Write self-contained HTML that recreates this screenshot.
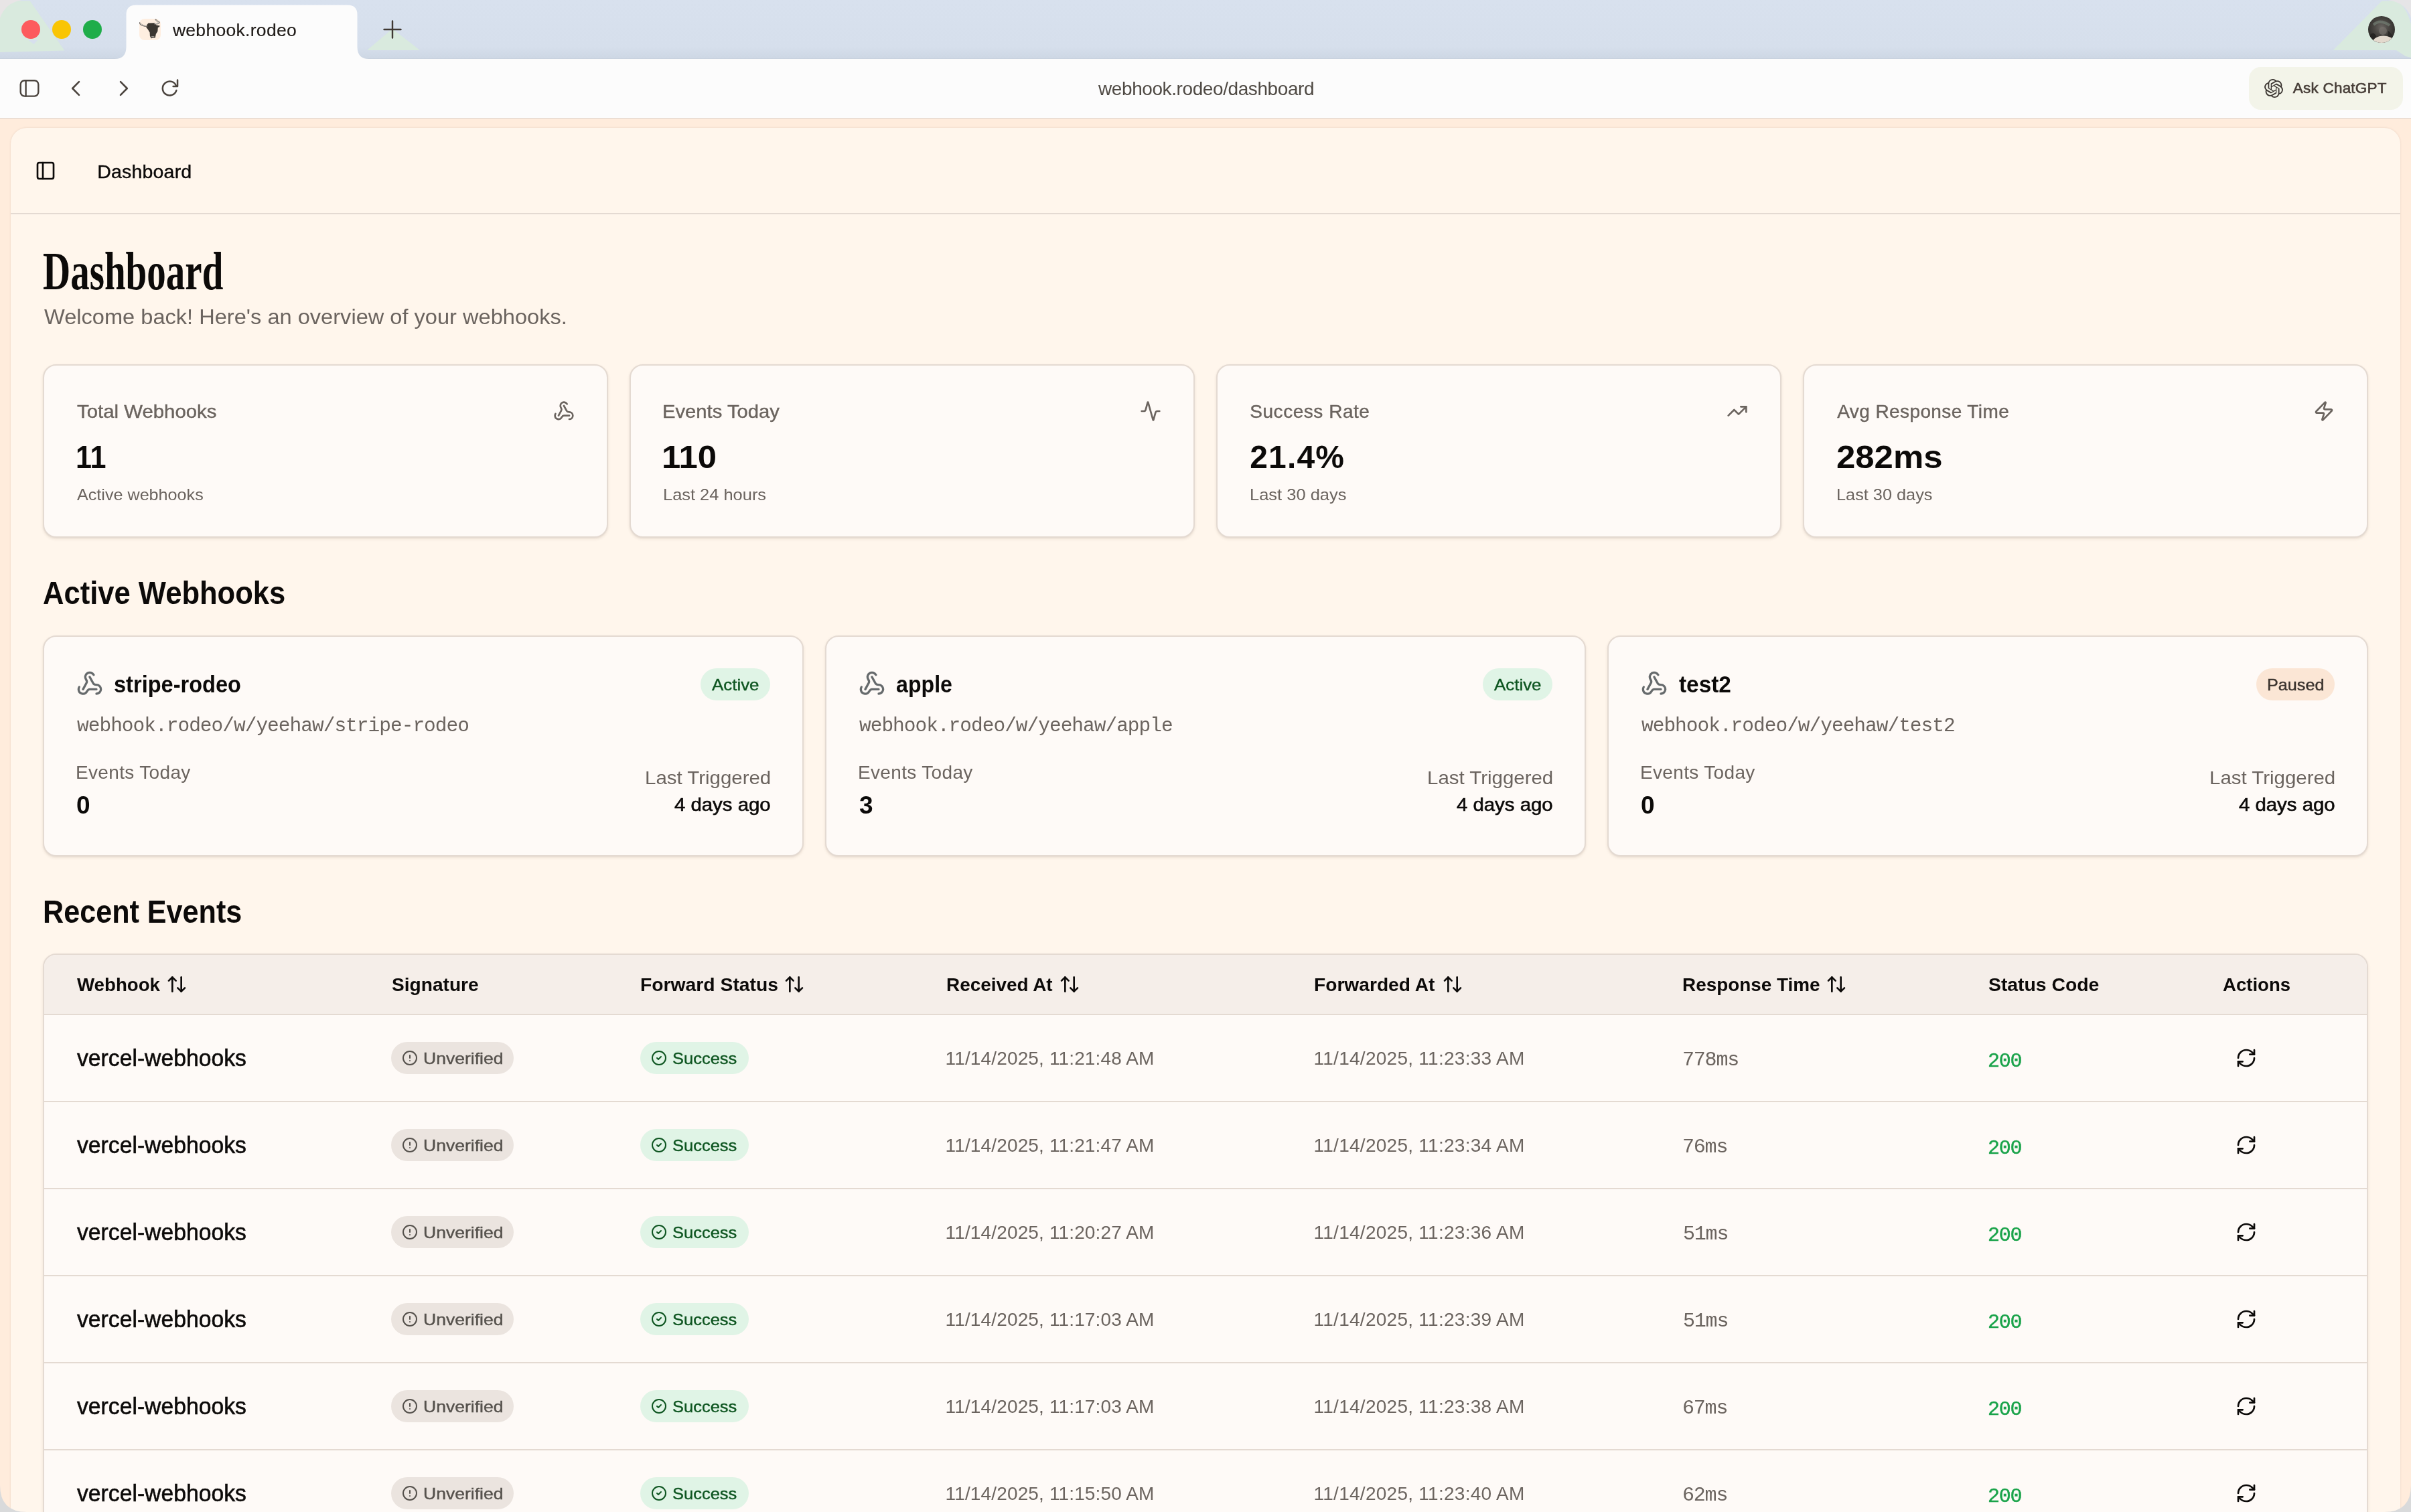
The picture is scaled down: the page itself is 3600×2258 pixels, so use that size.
<!DOCTYPE html>
<html><head><meta charset="utf-8"><title>webhook.rodeo</title><style>
html,body{margin:0;padding:0}
body{width:3600px;height:2258px;overflow:hidden;position:relative;background:#ffecdc;font-family:"Liberation Sans", sans-serif;color:#0c0a09}
.b,.i,.t{position:absolute;display:block}
.t{white-space:pre}
#tx{position:absolute;left:0;top:0;width:3600px;height:2258px;will-change:transform}
.se{font-family:"Liberation Serif", serif}
.mo{font-family:"Liberation Mono", monospace}
.c{border:2px solid #e4dad2;border-radius:20px;background:#fefaf7;box-sizing:border-box;box-shadow:0 2px 4px rgba(90,60,40,.10),0 1px 2px rgba(90,60,40,.06)}
</style></head>
<body>
<div class="b" style="left:0px;top:0px;width:3600px;height:88px;background:linear-gradient(#d8e1ee 0,#d6dfec 70px,#cdd7e4 87px,#c3ccd8 88px)"></div>
<svg class="i" style="left:0;top:0" width="120" height="88" viewBox="0 0 120 88"><path d="M0 78V26Q3 10 24 1.2L44.6 1.2L96.4 75.4Z" fill="#d9eade"/><path d="M41.7 59.5L50.6 66L56.5 59.5Z" fill="#d7e0ed"/><path d="M0 0H33Q8 4 0 27Z" fill="#e8e5e6"/></svg>
<svg class="i" style="left:3480px;top:0" width="120" height="88" viewBox="0 0 120 88"><path d="M3.8 75L76.4 1.6L96 1.2Q112 6 120 36V86L112 84L98 75Z" fill="#d9eade"/><path d="M120 0H86Q112 4 120 26Z" fill="#e6e5e7"/></svg>
<svg class="i" style="left:540px;top:40px" width="100" height="40" viewBox="0 0 100 40"><path d="M8 35L46 3L87 35Z" fill="#d9eade"/></svg>
<div class="b" style="left:0px;top:88px;width:3600px;height:88px;background:#fcfcfc"></div>
<svg class="i" style="left:160px;top:6px" width="404" height="84" viewBox="0 0 404 84"><path d="M11 82Q28.5 82 28.5 64V16Q28.5 1.5 43 1.5H359Q373.5 1.5 373.5 16V64Q373.5 82 391 82V84H11Z" fill="#fcfcfc"/></svg>
<div class="b" style="left:32px;top:30px;width:28px;height:28px;border-radius:50%;background:#fd5b5d"></div>
<div class="b" style="left:78px;top:30px;width:28px;height:28px;border-radius:50%;background:#f9c504"></div>
<div class="b" style="left:124px;top:30px;width:28px;height:28px;border-radius:50%;background:#1fad4a"></div>
<div class="b" style="left:208px;top:28px;width:32px;height:32px;border-radius:8px;background:#feeee0"></div>
<svg class="i" style="left:208px;top:28px" width="32" height="32" viewBox="0 0 32 32"><path d="M13.5 6.6L22.8 6.2L25.5 9.6L30.8 10.4L29.6 12.6L27.8 13L27.4 18.8L24.9 22.8L23.7 28.6L17.6 29.2L15.9 25.8L15.6 20.4L12.9 15.9L10.4 12.9L11 9.4Z" fill="#3b3631"/><path d="M0.4 6.2Q3.2 10.8 11.4 11" stroke="#6e6862" stroke-width="2.2" fill="none" stroke-linecap="round"/><path d="M0.8 6.6Q3.6 10.2 10.6 10.4" stroke="#e9e4de" stroke-width="0.9" fill="none" stroke-linecap="round"/><path d="M23 7.6L26.4 7.4Q29.4 7.2 29.8 5.4Q27.2 4.6 24.4 1.4" stroke="#77716b" stroke-width="2" fill="none" stroke-linecap="round" stroke-linejoin="round"/><path d="M23.4 7.4L26.4 7.2Q28.8 7 29.2 5.6Q26.8 4.8 24.6 2" stroke="#efebe6" stroke-width="0.9" fill="none" stroke-linecap="round" stroke-linejoin="round"/><ellipse cx="20.2" cy="27" rx="2.6" ry="1" fill="#a49d96"/></svg>
<svg class="i" style="left:572px;top:30px" width="28" height="28" viewBox="0 0 28 28" stroke="#3f3833" stroke-width="2.4" stroke-linecap="round"><path d="M14 1.5V26.5M1.5 14H26.5"/></svg>
<svg class="i" style="left:3536px;top:24px" width="40" height="40" viewBox="0 0 40 40"><defs><clipPath id="av"><circle cx="20" cy="20" r="20"/></clipPath><radialGradient id="ag" cx="50%" cy="42%" r="60%"><stop offset="0" stop-color="#6b6763"/><stop offset=".45" stop-color="#4a4743"/><stop offset="1" stop-color="#2a2826"/></radialGradient></defs><g clip-path="url(#av)"><rect width="40" height="40" fill="url(#ag)"/><path d="M8 13Q15 7 22 9T32 14" stroke="#7d8c80" stroke-width="4" fill="none" opacity=".55"/><circle cx="22" cy="22" r="6" fill="#7a756f" opacity=".6"/><path d="M3 28Q8 22 12 30T10 40H0Z" fill="#262422"/><path d="M30 22Q36 26 38 36H28Z" fill="#2a2826"/><ellipse cx="23" cy="38.5" rx="16" ry="9" fill="#e3d9cd"/></g></svg>
<svg class="i" style="left:28px;top:116px" width="32" height="32" viewBox="0 0 32 32" stroke="#4a433d" fill="none" stroke-linecap="round" stroke-linejoin="round" stroke-width="2.4"><rect x="2.7" y="4.2" width="26.6" height="23.4" rx="6"/><path d="M10.6 4.2V27.6"/></svg>
<svg class="i" style="left:100px;top:116px" width="28" height="32" viewBox="0 0 28 32" stroke="#4a433d" fill="none" stroke-linecap="round" stroke-linejoin="round" stroke-width="2.6"><path d="M18 6.2L8.2 16L18 25.8"/></svg>
<svg class="i" style="left:170px;top:116px" width="28" height="32" viewBox="0 0 28 32" stroke="#4a433d" fill="none" stroke-linecap="round" stroke-linejoin="round" stroke-width="2.6"><path d="M10 6.2L19.8 16L10 25.8"/></svg>
<svg class="i" style="left:238px;top:116px" width="32" height="32" viewBox="0 0 32 32" stroke="#4a433d" fill="none" stroke-linecap="round" stroke-linejoin="round" stroke-width="2.5"><path d="M25.34 19.07A10.5 10.5 0 1 1 25.17 12.41"/><path d="M27.05 3.4V13H20.6"/></svg>
<div class="b" style="left:3358px;top:100px;width:230px;height:64px;border-radius:18px;background:#f3f4e9"></div>
<svg class="i" style="left:3381px;top:118px" width="28" height="28" viewBox="0 0 24 24"><path d="M22.2819 9.8211a5.9847 5.9847 0 0 0-.5157-4.9108 6.0462 6.0462 0 0 0-6.5098-2.9A6.0651 6.0651 0 0 0 4.9807 4.1818a5.9847 5.9847 0 0 0-3.9977 2.9 6.0462 6.0462 0 0 0 .7427 7.0966 5.98 5.98 0 0 0 .511 4.9107 6.051 6.051 0 0 0 6.5146 2.9001A5.9847 5.9847 0 0 0 13.2599 24a6.0557 6.0557 0 0 0 5.7718-4.2058 5.9894 5.9894 0 0 0 3.9977-2.9001 6.0557 6.0557 0 0 0-.7475-7.0729zm-9.022 12.6081a4.4755 4.4755 0 0 1-2.8764-1.0408l.1419-.0804 4.7783-2.7582a.7948.7948 0 0 0 .3927-.6813v-6.7369l2.02 1.1686a.071.071 0 0 1 .038.052v5.5826a4.504 4.504 0 0 1-4.4945 4.4944zm-9.6607-4.1254a4.4708 4.4708 0 0 1-.5346-3.0137l.142.0852 4.783 2.7582a.7712.7712 0 0 0 .7806 0l5.8428-3.3685v2.3324a.0804.0804 0 0 1-.0332.0615L9.74 19.9502a4.4992 4.4992 0 0 1-6.1408-1.6464zM2.3408 7.8956a4.485 4.485 0 0 1 2.3655-1.9728V11.6a.7664.7664 0 0 0 .3879.6765l5.8144 3.3543-2.0201 1.1685a.0757.0757 0 0 1-.071 0l-4.8303-2.7865A4.504 4.504 0 0 1 2.3408 7.872zm16.5963 3.8558L13.1038 8.364 15.1192 7.2a.0757.0757 0 0 1 .071 0l4.8303 2.7913a4.4944 4.4944 0 0 1-.6765 8.1042v-5.6772a.79.79 0 0 0-.407-.667zm2.0107-3.0231l-.142-.0852-4.7735-2.7818a.7759.7759 0 0 0-.7854 0L9.409 9.2297V6.8974a.0662.0662 0 0 1 .0284-.0615l4.8303-2.7866a4.4992 4.4992 0 0 1 6.6802 4.66zM8.3065 12.863l-2.02-1.1638a.0804.0804 0 0 1-.038-.0567V6.0742a4.4992 4.4992 0 0 1 7.3757-3.4537l-.142.0805L8.704 5.459a.7948.7948 0 0 0-.3927.6813zm1.0976-2.3654l2.602-1.4998 2.6069 1.4998v2.9994l-2.5974 1.4997-2.6067-1.4997Z" fill="#3c3632"/></svg>
<div class="b" style="left:0px;top:176px;width:3600px;height:2082px;background:#ffecdc"></div>
<div class="b" style="left:0px;top:175.5px;width:3600px;height:1.4px;background:#dbd2cc"></div>
<div class="b" style="left:16px;top:191px;width:3568px;height:2100px;background:#fff6ec;border-radius:24px;box-shadow:0 0 3px rgba(120,80,60,.16)"></div>
<div class="b" style="left:16px;top:318px;width:3568px;height:2px;background:#e4dad2"></div>
<svg class="i" style="left:52px;top:239px" width="32" height="32" viewBox="0 0 24 24" fill="none" stroke="#0c0a09" stroke-width="2" stroke-linecap="round" stroke-linejoin="round" ><rect width="18" height="18" x="3" y="3" rx="2"/><path d="M9 3v18"/></svg>
<div class="b c" style="left:64px;top:544px;width:844px;height:259px"></div>
<svg class="i" style="left:826px;top:598px" width="32" height="32" viewBox="0 0 24 24" fill="none" stroke="#6b645f" stroke-width="2" stroke-linecap="round" stroke-linejoin="round" ><path d="M18 16.98h-5.99c-1.1 0-1.95.94-2.48 1.9A4 4 0 0 1 2 17c.01-.7.2-1.4.57-2"/><path d="m6 17 3.13-5.78c.53-.97.1-2.18-.5-3.1a4 4 0 1 1 6.89-4.06"/><path d="m12 6 3.13 5.73C15.66 12.7 16.9 13 18 13a4 4 0 0 1 0 8"/></svg>
<div class="b c" style="left:940px;top:544px;width:844px;height:259px"></div>
<svg class="i" style="left:1702px;top:598px" width="32" height="32" viewBox="0 0 24 24" fill="none" stroke="#6b645f" stroke-width="2" stroke-linecap="round" stroke-linejoin="round" ><path d="M22 12h-2.48a2 2 0 0 0-1.93 1.46l-2.35 8.36a.25.25 0 0 1-.48 0L9.24 2.18a.25.25 0 0 0-.48 0l-2.35 8.36A2 2 0 0 1 4.49 12H2"/></svg>
<div class="b c" style="left:1816px;top:544px;width:844px;height:259px"></div>
<svg class="i" style="left:2578px;top:598px" width="32" height="32" viewBox="0 0 24 24" fill="none" stroke="#6b645f" stroke-width="2" stroke-linecap="round" stroke-linejoin="round" ><polyline points="22 7 13.5 15.5 8.5 10.5 2 17"/><polyline points="16 7 22 7 22 13"/></svg>
<div class="b c" style="left:2692px;top:544px;width:844px;height:259px"></div>
<svg class="i" style="left:3454px;top:598px" width="32" height="32" viewBox="0 0 24 24" fill="none" stroke="#6b645f" stroke-width="2" stroke-linecap="round" stroke-linejoin="round" ><path d="M4 14a1 1 0 0 1-.78-1.63l9.9-10.2a.5.5 0 0 1 .86.46l-1.92 6.02A1 1 0 0 0 13 10h7a1 1 0 0 1 .78 1.63l-9.9 10.2a.5.5 0 0 1-.86-.46l1.92-6.02A1 1 0 0 0 11 14z"/></svg>
<div class="b c" style="left:64px;top:949px;width:1136px;height:330px"></div>
<svg class="i" style="left:114px;top:1001px" width="40" height="40" viewBox="0 0 24 24" fill="none" stroke="#666a6c" stroke-width="2" stroke-linecap="round" stroke-linejoin="round" ><path d="M18 16.98h-5.99c-1.1 0-1.95.94-2.48 1.9A4 4 0 0 1 2 17c.01-.7.2-1.4.57-2"/><path d="m6 17 3.13-5.78c.53-.97.1-2.18-.5-3.1a4 4 0 1 1 6.89-4.06"/><path d="m12 6 3.13 5.73C15.66 12.7 16.9 13 18 13a4 4 0 0 1 0 8"/></svg>
<div class="b" style="left:1046px;top:998px;width:104px;height:48px;border-radius:24px;background:#e0f4e6"></div>
<div class="b c" style="left:1232px;top:949px;width:1136px;height:330px"></div>
<svg class="i" style="left:1282px;top:1001px" width="40" height="40" viewBox="0 0 24 24" fill="none" stroke="#666a6c" stroke-width="2" stroke-linecap="round" stroke-linejoin="round" ><path d="M18 16.98h-5.99c-1.1 0-1.95.94-2.48 1.9A4 4 0 0 1 2 17c.01-.7.2-1.4.57-2"/><path d="m6 17 3.13-5.78c.53-.97.1-2.18-.5-3.1a4 4 0 1 1 6.89-4.06"/><path d="m12 6 3.13 5.73C15.66 12.7 16.9 13 18 13a4 4 0 0 1 0 8"/></svg>
<div class="b" style="left:2214px;top:998px;width:104px;height:48px;border-radius:24px;background:#e0f4e6"></div>
<div class="b c" style="left:2400px;top:949px;width:1136px;height:330px"></div>
<svg class="i" style="left:2450px;top:1001px" width="40" height="40" viewBox="0 0 24 24" fill="none" stroke="#666a6c" stroke-width="2" stroke-linecap="round" stroke-linejoin="round" ><path d="M18 16.98h-5.99c-1.1 0-1.95.94-2.48 1.9A4 4 0 0 1 2 17c.01-.7.2-1.4.57-2"/><path d="m6 17 3.13-5.78c.53-.97.1-2.18-.5-3.1a4 4 0 1 1 6.89-4.06"/><path d="m12 6 3.13 5.73C15.66 12.7 16.9 13 18 13a4 4 0 0 1 0 8"/></svg>
<div class="b" style="left:3369px;top:998px;width:117px;height:48px;border-radius:24px;background:#fbe6d5"></div>
<div class="b" style="left:64px;top:1424px;width:3472px;height:900px;border:2px solid #e4dad2;border-radius:20px;background:#fefaf7;box-sizing:border-box;overflow:hidden;box-shadow:0 2px 4px rgba(90,60,40,.10)"><div style="height:88px;background:#f5eee9;border-bottom:2px solid #e4dad2"></div><div style="height:128px;border-bottom:2px solid #e4dad2"></div><div style="height:128px;border-bottom:2px solid #e4dad2"></div><div style="height:128px;border-bottom:2px solid #e4dad2"></div><div style="height:128px;border-bottom:2px solid #e4dad2"></div><div style="height:128px;border-bottom:2px solid #e4dad2"></div><div style="height:128px;border-bottom:2px solid #e4dad2"></div></div>
<svg class="i" style="left:247.6px;top:1454px" width="32" height="32" viewBox="0 0 24 24" fill="none" stroke="#0c0a09" stroke-width="2" stroke-linecap="round" stroke-linejoin="round" ><path d="m21 16-4 4-4-4"/><path d="M17 20V4"/><path d="m3 8 4-4 4 4"/><path d="M7 4v16"/></svg>
<svg class="i" style="left:1170px;top:1454px" width="32" height="32" viewBox="0 0 24 24" fill="none" stroke="#0c0a09" stroke-width="2" stroke-linecap="round" stroke-linejoin="round" ><path d="m21 16-4 4-4-4"/><path d="M17 20V4"/><path d="m3 8 4-4 4 4"/><path d="M7 4v16"/></svg>
<svg class="i" style="left:1580.5px;top:1454px" width="32" height="32" viewBox="0 0 24 24" fill="none" stroke="#0c0a09" stroke-width="2" stroke-linecap="round" stroke-linejoin="round" ><path d="m21 16-4 4-4-4"/><path d="M17 20V4"/><path d="m3 8 4-4 4 4"/><path d="M7 4v16"/></svg>
<svg class="i" style="left:2152.5px;top:1454px" width="32" height="32" viewBox="0 0 24 24" fill="none" stroke="#0c0a09" stroke-width="2" stroke-linecap="round" stroke-linejoin="round" ><path d="m21 16-4 4-4-4"/><path d="M17 20V4"/><path d="m3 8 4-4 4 4"/><path d="M7 4v16"/></svg>
<svg class="i" style="left:2726px;top:1454px" width="32" height="32" viewBox="0 0 24 24" fill="none" stroke="#0c0a09" stroke-width="2" stroke-linecap="round" stroke-linejoin="round" ><path d="m21 16-4 4-4-4"/><path d="M17 20V4"/><path d="m3 8 4-4 4 4"/><path d="M7 4v16"/></svg>
<div class="b" style="left:584px;top:1556px;width:183px;height:48px;border-radius:24px;background:#ebe4df"></div>
<svg class="i" style="left:600px;top:1568px" width="24" height="24" viewBox="0 0 24 24" fill="none" stroke="#55514c" stroke-width="2" stroke-linecap="round" stroke-linejoin="round" ><circle cx="12" cy="12" r="10"/><line x1="12" x2="12" y1="8" y2="12"/><line x1="12" x2="12.01" y1="16" y2="16"/></svg>
<div class="b" style="left:956px;top:1556px;width:162px;height:48px;border-radius:24px;background:#e0f4e6"></div>
<svg class="i" style="left:972px;top:1568px" width="24" height="24" viewBox="0 0 24 24" fill="none" stroke="#0d5520" stroke-width="2" stroke-linecap="round" stroke-linejoin="round" ><circle cx="12" cy="12" r="10"/><path d="m9 12 2 2 4-4"/></svg>
<svg class="i" style="left:3338px;top:1564px" width="32" height="32" viewBox="0 0 24 24" fill="none" stroke="#0c0a09" stroke-width="2" stroke-linecap="round" stroke-linejoin="round" ><path d="M3 12a9 9 0 0 1 9-9 9.75 9.75 0 0 1 6.74 2.74L21 8"/><path d="M21 3v5h-5"/><path d="M21 12a9 9 0 0 1-9 9 9.75 9.75 0 0 1-6.74-2.74L3 16"/><path d="M8 16H3v5"/></svg>
<div class="b" style="left:584px;top:1686px;width:183px;height:48px;border-radius:24px;background:#ebe4df"></div>
<svg class="i" style="left:600px;top:1698px" width="24" height="24" viewBox="0 0 24 24" fill="none" stroke="#55514c" stroke-width="2" stroke-linecap="round" stroke-linejoin="round" ><circle cx="12" cy="12" r="10"/><line x1="12" x2="12" y1="8" y2="12"/><line x1="12" x2="12.01" y1="16" y2="16"/></svg>
<div class="b" style="left:956px;top:1686px;width:162px;height:48px;border-radius:24px;background:#e0f4e6"></div>
<svg class="i" style="left:972px;top:1698px" width="24" height="24" viewBox="0 0 24 24" fill="none" stroke="#0d5520" stroke-width="2" stroke-linecap="round" stroke-linejoin="round" ><circle cx="12" cy="12" r="10"/><path d="m9 12 2 2 4-4"/></svg>
<svg class="i" style="left:3338px;top:1694px" width="32" height="32" viewBox="0 0 24 24" fill="none" stroke="#0c0a09" stroke-width="2" stroke-linecap="round" stroke-linejoin="round" ><path d="M3 12a9 9 0 0 1 9-9 9.75 9.75 0 0 1 6.74 2.74L21 8"/><path d="M21 3v5h-5"/><path d="M21 12a9 9 0 0 1-9 9 9.75 9.75 0 0 1-6.74-2.74L3 16"/><path d="M8 16H3v5"/></svg>
<div class="b" style="left:584px;top:1816px;width:183px;height:48px;border-radius:24px;background:#ebe4df"></div>
<svg class="i" style="left:600px;top:1828px" width="24" height="24" viewBox="0 0 24 24" fill="none" stroke="#55514c" stroke-width="2" stroke-linecap="round" stroke-linejoin="round" ><circle cx="12" cy="12" r="10"/><line x1="12" x2="12" y1="8" y2="12"/><line x1="12" x2="12.01" y1="16" y2="16"/></svg>
<div class="b" style="left:956px;top:1816px;width:162px;height:48px;border-radius:24px;background:#e0f4e6"></div>
<svg class="i" style="left:972px;top:1828px" width="24" height="24" viewBox="0 0 24 24" fill="none" stroke="#0d5520" stroke-width="2" stroke-linecap="round" stroke-linejoin="round" ><circle cx="12" cy="12" r="10"/><path d="m9 12 2 2 4-4"/></svg>
<svg class="i" style="left:3338px;top:1824px" width="32" height="32" viewBox="0 0 24 24" fill="none" stroke="#0c0a09" stroke-width="2" stroke-linecap="round" stroke-linejoin="round" ><path d="M3 12a9 9 0 0 1 9-9 9.75 9.75 0 0 1 6.74 2.74L21 8"/><path d="M21 3v5h-5"/><path d="M21 12a9 9 0 0 1-9 9 9.75 9.75 0 0 1-6.74-2.74L3 16"/><path d="M8 16H3v5"/></svg>
<div class="b" style="left:584px;top:1946px;width:183px;height:48px;border-radius:24px;background:#ebe4df"></div>
<svg class="i" style="left:600px;top:1958px" width="24" height="24" viewBox="0 0 24 24" fill="none" stroke="#55514c" stroke-width="2" stroke-linecap="round" stroke-linejoin="round" ><circle cx="12" cy="12" r="10"/><line x1="12" x2="12" y1="8" y2="12"/><line x1="12" x2="12.01" y1="16" y2="16"/></svg>
<div class="b" style="left:956px;top:1946px;width:162px;height:48px;border-radius:24px;background:#e0f4e6"></div>
<svg class="i" style="left:972px;top:1958px" width="24" height="24" viewBox="0 0 24 24" fill="none" stroke="#0d5520" stroke-width="2" stroke-linecap="round" stroke-linejoin="round" ><circle cx="12" cy="12" r="10"/><path d="m9 12 2 2 4-4"/></svg>
<svg class="i" style="left:3338px;top:1954px" width="32" height="32" viewBox="0 0 24 24" fill="none" stroke="#0c0a09" stroke-width="2" stroke-linecap="round" stroke-linejoin="round" ><path d="M3 12a9 9 0 0 1 9-9 9.75 9.75 0 0 1 6.74 2.74L21 8"/><path d="M21 3v5h-5"/><path d="M21 12a9 9 0 0 1-9 9 9.75 9.75 0 0 1-6.74-2.74L3 16"/><path d="M8 16H3v5"/></svg>
<div class="b" style="left:584px;top:2076px;width:183px;height:48px;border-radius:24px;background:#ebe4df"></div>
<svg class="i" style="left:600px;top:2088px" width="24" height="24" viewBox="0 0 24 24" fill="none" stroke="#55514c" stroke-width="2" stroke-linecap="round" stroke-linejoin="round" ><circle cx="12" cy="12" r="10"/><line x1="12" x2="12" y1="8" y2="12"/><line x1="12" x2="12.01" y1="16" y2="16"/></svg>
<div class="b" style="left:956px;top:2076px;width:162px;height:48px;border-radius:24px;background:#e0f4e6"></div>
<svg class="i" style="left:972px;top:2088px" width="24" height="24" viewBox="0 0 24 24" fill="none" stroke="#0d5520" stroke-width="2" stroke-linecap="round" stroke-linejoin="round" ><circle cx="12" cy="12" r="10"/><path d="m9 12 2 2 4-4"/></svg>
<svg class="i" style="left:3338px;top:2084px" width="32" height="32" viewBox="0 0 24 24" fill="none" stroke="#0c0a09" stroke-width="2" stroke-linecap="round" stroke-linejoin="round" ><path d="M3 12a9 9 0 0 1 9-9 9.75 9.75 0 0 1 6.74 2.74L21 8"/><path d="M21 3v5h-5"/><path d="M21 12a9 9 0 0 1-9 9 9.75 9.75 0 0 1-6.74-2.74L3 16"/><path d="M8 16H3v5"/></svg>
<div class="b" style="left:584px;top:2206px;width:183px;height:48px;border-radius:24px;background:#ebe4df"></div>
<svg class="i" style="left:600px;top:2218px" width="24" height="24" viewBox="0 0 24 24" fill="none" stroke="#55514c" stroke-width="2" stroke-linecap="round" stroke-linejoin="round" ><circle cx="12" cy="12" r="10"/><line x1="12" x2="12" y1="8" y2="12"/><line x1="12" x2="12.01" y1="16" y2="16"/></svg>
<div class="b" style="left:956px;top:2206px;width:162px;height:48px;border-radius:24px;background:#e0f4e6"></div>
<svg class="i" style="left:972px;top:2218px" width="24" height="24" viewBox="0 0 24 24" fill="none" stroke="#0d5520" stroke-width="2" stroke-linecap="round" stroke-linejoin="round" ><circle cx="12" cy="12" r="10"/><path d="m9 12 2 2 4-4"/></svg>
<svg class="i" style="left:3338px;top:2214px" width="32" height="32" viewBox="0 0 24 24" fill="none" stroke="#0c0a09" stroke-width="2" stroke-linecap="round" stroke-linejoin="round" ><path d="M3 12a9 9 0 0 1 9-9 9.75 9.75 0 0 1 6.74 2.74L21 8"/><path d="M21 3v5h-5"/><path d="M21 12a9 9 0 0 1-9 9 9.75 9.75 0 0 1-6.74-2.74L3 16"/><path d="M8 16H3v5"/></svg>
<svg class="i" style="left:0;top:2218px" width="40" height="40" viewBox="0 0 40 40"><path d="M0 0Q0 40 40 40H0Z" fill="#d9dadb"/></svg>
<svg class="i" style="left:3560px;top:2218px" width="40" height="40" viewBox="0 0 40 40"><path d="M40 0Q40 40 0 40H40Z" fill="#d9dadb"/></svg>
<div id="tx">
<span class="t" style="left:257.9px;top:31.65px;font-size:26.5px;line-height:26.5px;color:#1f1b18;letter-spacing:0.3px;-webkit-text-stroke:0.2px currentColor">webhook.rodeo</span>
<span class="t" style="left:1640px;top:118.5px;font-size:28px;line-height:28px;color:#4f4a44;letter-spacing:-0.41px">webhook.rodeo/dashboard</span>
<span class="t" style="left:3423.8px;top:121.25px;font-size:22.5px;line-height:22.5px;color:#463d37;letter-spacing:0.22px;-webkit-text-stroke:0.6px currentColor">Ask ChatGPT</span>
<span class="t" style="left:145.2px;top:241.55px;font-size:28.5px;line-height:28.5px;letter-spacing:0.2px;-webkit-text-stroke:0.4px currentColor">Dashboard</span>
<span class="t se" style="left:63.99px;top:365.05px;font-size:80.5px;line-height:80.5px;font-weight:700;transform:scaleX(0.7084);transform-origin:0 0">Dashboard</span>
<span class="t" style="left:66px;top:457.85px;font-size:31.3px;line-height:31.3px;color:#6b645f;transform:scaleX(1.0412);transform-origin:0 0">Welcome back! Here's an overview of your webhooks.</span>
<span class="t" style="left:115.3px;top:600.9px;font-size:28px;line-height:28px;color:#6b645f;-webkit-text-stroke:0.4px currentColor;transform:scaleX(1.0490);transform-origin:0 0">Total Webhooks</span>
<span class="t" style="left:112.6px;top:659px;font-size:48px;line-height:48px;font-weight:700;transform:scaleX(0.8991);transform-origin:0 0">11</span>
<span class="t" style="left:115.3px;top:726.7px;font-size:24px;line-height:24px;color:#6b645f;transform:scaleX(1.0478);transform-origin:0 0">Active webhooks</span>
<span class="t" style="left:989.21px;top:600.9px;font-size:28px;line-height:28px;color:#6b645f;-webkit-text-stroke:0.4px currentColor;transform:scaleX(1.0434);transform-origin:0 0">Events Today</span>
<span class="t" style="left:988.12px;top:659px;font-size:48px;line-height:48px;font-weight:700;transform:scaleX(1.0585);transform-origin:0 0">110</span>
<span class="t" style="left:990.24px;top:726.7px;font-size:24px;line-height:24px;color:#6b645f;transform:scaleX(1.0593);transform-origin:0 0">Last 24 hours</span>
<span class="t" style="left:1866.3px;top:600.9px;font-size:28px;line-height:28px;color:#6b645f;letter-spacing:0.53px;-webkit-text-stroke:0.4px currentColor">Success Rate</span>
<span class="t" style="left:1866.3px;top:659px;font-size:48px;line-height:48px;font-weight:700;letter-spacing:1.12px">21.4%</span>
<span class="t" style="left:1866.24px;top:726.7px;font-size:24px;line-height:24px;color:#6b645f;transform:scaleX(1.0615);transform-origin:0 0">Last 30 days</span>
<span class="t" style="left:2743.3px;top:600.9px;font-size:28px;line-height:28px;color:#6b645f;letter-spacing:0.4px;-webkit-text-stroke:0.4px currentColor">Avg Response Time</span>
<span class="t" style="left:2742.24px;top:659px;font-size:48px;line-height:48px;font-weight:700;transform:scaleX(1.0602);transform-origin:0 0">282ms</span>
<span class="t" style="left:2742.25px;top:726.7px;font-size:24px;line-height:24px;color:#6b645f;transform:scaleX(1.0541);transform-origin:0 0">Last 30 days</span>
<span class="t" style="left:64px;top:861.15px;font-size:48.5px;line-height:48.5px;font-weight:700;transform:scaleX(0.8981);transform-origin:0 0">Active Webhooks</span>
<span class="t" style="left:63.83px;top:1336.95px;font-size:48.5px;line-height:48.5px;font-weight:700;transform:scaleX(0.8895);transform-origin:0 0">Recent Events</span>
<span class="t" style="left:170.47px;top:1003.8px;font-size:35px;line-height:35px;font-weight:700;transform:scaleX(0.9304);transform-origin:0 0">stripe-rodeo</span>
<span class="t mo" style="left:115px;top:1069.55px;font-size:29.5px;line-height:29.5px;color:#6b645f;letter-spacing:-0.99px">webhook.rodeo/w/yeehaw/stripe-rodeo</span>
<span class="t" style="left:113px;top:1140.3px;font-size:28px;line-height:28px;color:#6b645f;letter-spacing:0.34px">Events Today</span>
<span class="t" style="left:114px;top:1183.5px;font-size:37px;line-height:37px;font-weight:700">0</span>
<span class="t" style="left:962.5px;top:1148.3px;font-size:28px;line-height:28px;color:#6b645f;transform:scaleX(1.0516);transform-origin:0 0">Last Triggered</span>
<span class="t" style="left:1006.6px;top:1187.8px;font-size:28px;line-height:28px;-webkit-text-stroke:0.6px currentColor;transform:scaleX(1.0482);transform-origin:0 0">4 days ago</span>
<span class="t" style="left:1062.8px;top:1010.7px;font-size:24px;line-height:24px;color:#0d5520;-webkit-text-stroke:0.4px currentColor;transform:scaleX(1.0783);transform-origin:0 0">Active</span>
<span class="t" style="left:1338.48px;top:1003.8px;font-size:35px;line-height:35px;font-weight:700;transform:scaleX(0.9183);transform-origin:0 0">apple</span>
<span class="t mo" style="left:1283px;top:1069.55px;font-size:29.5px;line-height:29.5px;color:#6b645f;letter-spacing:-1px">webhook.rodeo/w/yeehaw/apple</span>
<span class="t" style="left:1281px;top:1140.3px;font-size:28px;line-height:28px;color:#6b645f;letter-spacing:0.34px">Events Today</span>
<span class="t" style="left:1283px;top:1183.5px;font-size:37px;line-height:37px;font-weight:700">3</span>
<span class="t" style="left:2130.5px;top:1148.3px;font-size:28px;line-height:28px;color:#6b645f;transform:scaleX(1.0516);transform-origin:0 0">Last Triggered</span>
<span class="t" style="left:2174.6px;top:1187.8px;font-size:28px;line-height:28px;-webkit-text-stroke:0.6px currentColor;transform:scaleX(1.0482);transform-origin:0 0">4 days ago</span>
<span class="t" style="left:2230.8px;top:1010.7px;font-size:24px;line-height:24px;color:#0d5520;-webkit-text-stroke:0.4px currentColor;transform:scaleX(1.0783);transform-origin:0 0">Active</span>
<span class="t" style="left:2507.4px;top:1003.8px;font-size:35px;line-height:35px;font-weight:700;transform:scaleX(0.9539);transform-origin:0 0">test2</span>
<span class="t mo" style="left:2451px;top:1069.55px;font-size:29.5px;line-height:29.5px;color:#6b645f;letter-spacing:-1px">webhook.rodeo/w/yeehaw/test2</span>
<span class="t" style="left:2449px;top:1140.3px;font-size:28px;line-height:28px;color:#6b645f;letter-spacing:0.34px">Events Today</span>
<span class="t" style="left:2450px;top:1183.5px;font-size:37px;line-height:37px;font-weight:700">0</span>
<span class="t" style="left:3298.5px;top:1148.3px;font-size:28px;line-height:28px;color:#6b645f;transform:scaleX(1.0516);transform-origin:0 0">Last Triggered</span>
<span class="t" style="left:3342.6px;top:1187.8px;font-size:28px;line-height:28px;-webkit-text-stroke:0.6px currentColor;transform:scaleX(1.0482);transform-origin:0 0">4 days ago</span>
<span class="t" style="left:3384.95px;top:1010.7px;font-size:24px;line-height:24px;color:#3a332e;-webkit-text-stroke:0.4px currentColor;transform:scaleX(1.0500);transform-origin:0 0">Paused</span>
<span class="t" style="left:115.4px;top:1456.9px;font-size:28px;line-height:28px;font-weight:700;transform:scaleX(0.9880);transform-origin:0 0">Webhook</span>
<span class="t" style="left:585.2px;top:1456.9px;font-size:28px;line-height:28px;font-weight:700;transform:scaleX(1.0042);transform-origin:0 0">Signature</span>
<span class="t" style="left:956.09px;top:1456.9px;font-size:28px;line-height:28px;font-weight:700;transform:scaleX(1.0107);transform-origin:0 0">Forward Status</span>
<span class="t" style="left:1412.6px;top:1456.9px;font-size:28px;line-height:28px;font-weight:700;transform:scaleX(0.9958);transform-origin:0 0">Received At</span>
<span class="t" style="left:1962.49px;top:1456.9px;font-size:28px;line-height:28px;font-weight:700;transform:scaleX(1.0060);transform-origin:0 0">Forwarded At</span>
<span class="t" style="left:2512px;top:1456.9px;font-size:28px;line-height:28px;font-weight:700;transform:scaleX(0.9957);transform-origin:0 0">Response Time</span>
<span class="t" style="left:2968.9px;top:1456.9px;font-size:28px;line-height:28px;font-weight:700;transform:scaleX(1.0124);transform-origin:0 0">Status Code</span>
<span class="t" style="left:3318.9px;top:1456.9px;font-size:28px;line-height:28px;font-weight:700;transform:scaleX(0.9843);transform-origin:0 0">Actions</span>
<span class="t" style="left:115.2px;top:1562px;font-size:35px;line-height:35px;-webkit-text-stroke:0.6px currentColor;transform:scaleX(0.9629);transform-origin:0 0">vercel-webhooks</span>
<span class="t" style="left:632.19px;top:1568.7px;font-size:24px;line-height:24px;color:#55514c;-webkit-text-stroke:0.4px currentColor;transform:scaleX(1.1050);transform-origin:0 0">Unverified</span>
<span class="t" style="left:1004.44px;top:1568.7px;font-size:24px;line-height:24px;color:#0d5520;-webkit-text-stroke:0.4px currentColor;transform:scaleX(1.0613);transform-origin:0 0">Success</span>
<span class="t" style="left:1411.6px;top:1567px;font-size:28px;line-height:28px;color:#6b645f;letter-spacing:0.14px">11/14/2025, 11:21:48 AM</span>
<span class="t" style="left:1961.5px;top:1567px;font-size:28px;line-height:28px;color:#6b645f;letter-spacing:0.27px">11/14/2025, 11:23:33 AM</span>
<span class="t mo" style="left:2512px;top:1567.6px;font-size:30px;line-height:30px;color:#6b645f;letter-spacing:-1.2px">778ms</span>
<span class="t mo" style="left:2968px;top:1569.6px;font-size:30px;line-height:30px;color:#1aa34a;letter-spacing:-1.2px;-webkit-text-stroke:0.45px currentColor">200</span>
<span class="t" style="left:115.2px;top:1692px;font-size:35px;line-height:35px;-webkit-text-stroke:0.6px currentColor;transform:scaleX(0.9629);transform-origin:0 0">vercel-webhooks</span>
<span class="t" style="left:632.19px;top:1698.7px;font-size:24px;line-height:24px;color:#55514c;-webkit-text-stroke:0.4px currentColor;transform:scaleX(1.1050);transform-origin:0 0">Unverified</span>
<span class="t" style="left:1004.44px;top:1698.7px;font-size:24px;line-height:24px;color:#0d5520;-webkit-text-stroke:0.4px currentColor;transform:scaleX(1.0613);transform-origin:0 0">Success</span>
<span class="t" style="left:1411.6px;top:1697px;font-size:28px;line-height:28px;color:#6b645f;letter-spacing:0.14px">11/14/2025, 11:21:47 AM</span>
<span class="t" style="left:1961.5px;top:1697px;font-size:28px;line-height:28px;color:#6b645f;letter-spacing:0.27px">11/14/2025, 11:23:34 AM</span>
<span class="t mo" style="left:2512px;top:1697.6px;font-size:30px;line-height:30px;color:#6b645f;letter-spacing:-1.2px">76ms</span>
<span class="t mo" style="left:2968px;top:1699.6px;font-size:30px;line-height:30px;color:#1aa34a;letter-spacing:-1.2px;-webkit-text-stroke:0.45px currentColor">200</span>
<span class="t" style="left:115.2px;top:1822px;font-size:35px;line-height:35px;-webkit-text-stroke:0.6px currentColor;transform:scaleX(0.9629);transform-origin:0 0">vercel-webhooks</span>
<span class="t" style="left:632.19px;top:1828.7px;font-size:24px;line-height:24px;color:#55514c;-webkit-text-stroke:0.4px currentColor;transform:scaleX(1.1050);transform-origin:0 0">Unverified</span>
<span class="t" style="left:1004.44px;top:1828.7px;font-size:24px;line-height:24px;color:#0d5520;-webkit-text-stroke:0.4px currentColor;transform:scaleX(1.0613);transform-origin:0 0">Success</span>
<span class="t" style="left:1411.6px;top:1827px;font-size:28px;line-height:28px;color:#6b645f;letter-spacing:0.14px">11/14/2025, 11:20:27 AM</span>
<span class="t" style="left:1961.5px;top:1827px;font-size:28px;line-height:28px;color:#6b645f;letter-spacing:0.27px">11/14/2025, 11:23:36 AM</span>
<span class="t mo" style="left:2513px;top:1827.6px;font-size:30px;line-height:30px;color:#6b645f;letter-spacing:-1.2px">51ms</span>
<span class="t mo" style="left:2968px;top:1829.6px;font-size:30px;line-height:30px;color:#1aa34a;letter-spacing:-1.2px;-webkit-text-stroke:0.45px currentColor">200</span>
<span class="t" style="left:115.2px;top:1952px;font-size:35px;line-height:35px;-webkit-text-stroke:0.6px currentColor;transform:scaleX(0.9629);transform-origin:0 0">vercel-webhooks</span>
<span class="t" style="left:632.19px;top:1958.7px;font-size:24px;line-height:24px;color:#55514c;-webkit-text-stroke:0.4px currentColor;transform:scaleX(1.1050);transform-origin:0 0">Unverified</span>
<span class="t" style="left:1004.44px;top:1958.7px;font-size:24px;line-height:24px;color:#0d5520;-webkit-text-stroke:0.4px currentColor;transform:scaleX(1.0613);transform-origin:0 0">Success</span>
<span class="t" style="left:1411.6px;top:1957px;font-size:28px;line-height:28px;color:#6b645f;letter-spacing:0.14px">11/14/2025, 11:17:03 AM</span>
<span class="t" style="left:1961.5px;top:1957px;font-size:28px;line-height:28px;color:#6b645f;letter-spacing:0.27px">11/14/2025, 11:23:39 AM</span>
<span class="t mo" style="left:2513px;top:1957.6px;font-size:30px;line-height:30px;color:#6b645f;letter-spacing:-1.2px">51ms</span>
<span class="t mo" style="left:2968px;top:1959.6px;font-size:30px;line-height:30px;color:#1aa34a;letter-spacing:-1.2px;-webkit-text-stroke:0.45px currentColor">200</span>
<span class="t" style="left:115.2px;top:2082px;font-size:35px;line-height:35px;-webkit-text-stroke:0.6px currentColor;transform:scaleX(0.9629);transform-origin:0 0">vercel-webhooks</span>
<span class="t" style="left:632.19px;top:2088.7px;font-size:24px;line-height:24px;color:#55514c;-webkit-text-stroke:0.4px currentColor;transform:scaleX(1.1050);transform-origin:0 0">Unverified</span>
<span class="t" style="left:1004.44px;top:2088.7px;font-size:24px;line-height:24px;color:#0d5520;-webkit-text-stroke:0.4px currentColor;transform:scaleX(1.0613);transform-origin:0 0">Success</span>
<span class="t" style="left:1411.6px;top:2087px;font-size:28px;line-height:28px;color:#6b645f;letter-spacing:0.14px">11/14/2025, 11:17:03 AM</span>
<span class="t" style="left:1961.5px;top:2087px;font-size:28px;line-height:28px;color:#6b645f;letter-spacing:0.27px">11/14/2025, 11:23:38 AM</span>
<span class="t mo" style="left:2512px;top:2087.6px;font-size:30px;line-height:30px;color:#6b645f;letter-spacing:-1.2px">67ms</span>
<span class="t mo" style="left:2968px;top:2089.6px;font-size:30px;line-height:30px;color:#1aa34a;letter-spacing:-1.2px;-webkit-text-stroke:0.45px currentColor">200</span>
<span class="t" style="left:115.2px;top:2212px;font-size:35px;line-height:35px;-webkit-text-stroke:0.6px currentColor;transform:scaleX(0.9629);transform-origin:0 0">vercel-webhooks</span>
<span class="t" style="left:632.19px;top:2218.7px;font-size:24px;line-height:24px;color:#55514c;-webkit-text-stroke:0.4px currentColor;transform:scaleX(1.1050);transform-origin:0 0">Unverified</span>
<span class="t" style="left:1004.44px;top:2218.7px;font-size:24px;line-height:24px;color:#0d5520;-webkit-text-stroke:0.4px currentColor;transform:scaleX(1.0613);transform-origin:0 0">Success</span>
<span class="t" style="left:1411.6px;top:2217px;font-size:28px;line-height:28px;color:#6b645f;letter-spacing:0.14px">11/14/2025, 11:15:50 AM</span>
<span class="t" style="left:1961.5px;top:2217px;font-size:28px;line-height:28px;color:#6b645f;letter-spacing:0.27px">11/14/2025, 11:23:40 AM</span>
<span class="t mo" style="left:2512px;top:2217.6px;font-size:30px;line-height:30px;color:#6b645f;letter-spacing:-1.2px">62ms</span>
<span class="t mo" style="left:2968px;top:2219.6px;font-size:30px;line-height:30px;color:#1aa34a;letter-spacing:-1.2px;-webkit-text-stroke:0.45px currentColor">200</span>
</div>
</body></html>
